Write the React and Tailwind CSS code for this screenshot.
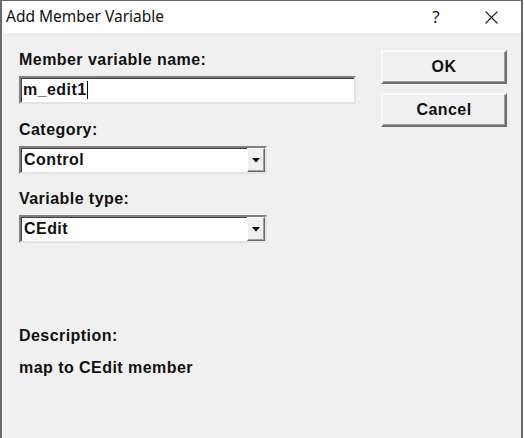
import React from 'react';

const sunken = "bg-white border-2 border-t-[#808080] border-l-[#808080] border-b-[#e3e3e3] border-r-[#e3e3e3] shadow-[inset_1px_1px_0_#404040]";
const label = "text-[16px] font-bold text-[#111] leading-[20px] tracking-[0.45px]";

const Combo = ({ value }) => (
    <div className={`${sunken} w-[248px] h-[28px] flex items-center`}>
        <span className="flex-1 pl-[3px] text-[16px] font-bold text-[#111] tracking-[0.45px]">{value}</span>
        <div className="w-[18px] h-[24px] bg-[#f0f0f0] border border-t-white border-l-white border-b-[#696969] border-r-[#696969] shadow-[inset_-1px_-1px_0_#a0a0a0] flex items-center justify-center">
            <svg width="8" height="5" viewBox="0 0 8 5"><path d="M0 0h8L4 4.5z" fill="#000" /></svg>
        </div>
    </div>
);

const Button = ({ children }) => (
    <button className="w-[126px] h-[34px] bg-[#f0f0f0] border-2 border-t-[#fafafa] border-l-[#fafafa] border-b-[#6e6e6e] border-r-[#6e6e6e] shadow-[inset_-1px_-1px_0_#a0a0a0] text-[16px] font-bold text-[#111] tracking-[0.45px]">
        {children}
    </button>
);

export default function App() {
    return (
        <div className="w-[524px] h-[438px] bg-white" style={{ fontFamily: '"Liberation Sans", Arial, sans-serif' }}>
            <div className="w-[523px] h-[438px] border-l-2 border-t border-r-2 border-[#6b6b6b] flex flex-col">
                <div className="h-[32px] bg-white flex items-center pl-[4px] text-[15.5px] text-[#111]" style={{ fontFamily: '"Noto Sans", sans-serif' }}>
                    <span className="flex-1">Add Member Variable</span>
                    <span className="w-[30px] text-center mr-[34px] text-[17px]">?</span>
                    <svg width="13" height="13" viewBox="0 0 13 13" className="mr-[23px]"><path d="M0.5 0.5l12 12M12.5 0.5l-12 12" stroke="#222" strokeWidth="1.1" /></svg>
                </div>
                <div className="flex-1 bg-[#f0f0f0] border-l border-white flex pl-[16px] pr-[14px]">
                    <div className="flex-1 flex flex-col">
                        <div className={`mt-[17px] ${label}`}>Member variable name:</div>
                        <div className={`${sunken} w-[337px] h-[28px] mt-[6px] flex items-center pl-[2px] text-[16px] font-bold text-[#111] tracking-[0.45px]`}>
                            m_edit1<span className="w-px h-[18px] bg-black" />
                        </div>
                        <div className={`mt-[16px] ${label}`}>Category:</div>
                        <div className="mt-[6px]"><Combo value="Control" /></div>
                        <div className={`mt-[15px] ${label}`}>Variable type:</div>
                        <div className="mt-[6px]"><Combo value="CEdit" /></div>
                        <div className={`mt-[83px] ${label}`}>Description:</div>
                        <div className={`mt-[12px] ${label}`}>map to CEdit member</div>
                    </div>
                    <div className="flex flex-col gap-[9px] pt-[17px]">
                        <Button>OK</Button>
                        <Button>Cancel</Button>
                    </div>
                </div>
            </div>
        </div>
    );
}
